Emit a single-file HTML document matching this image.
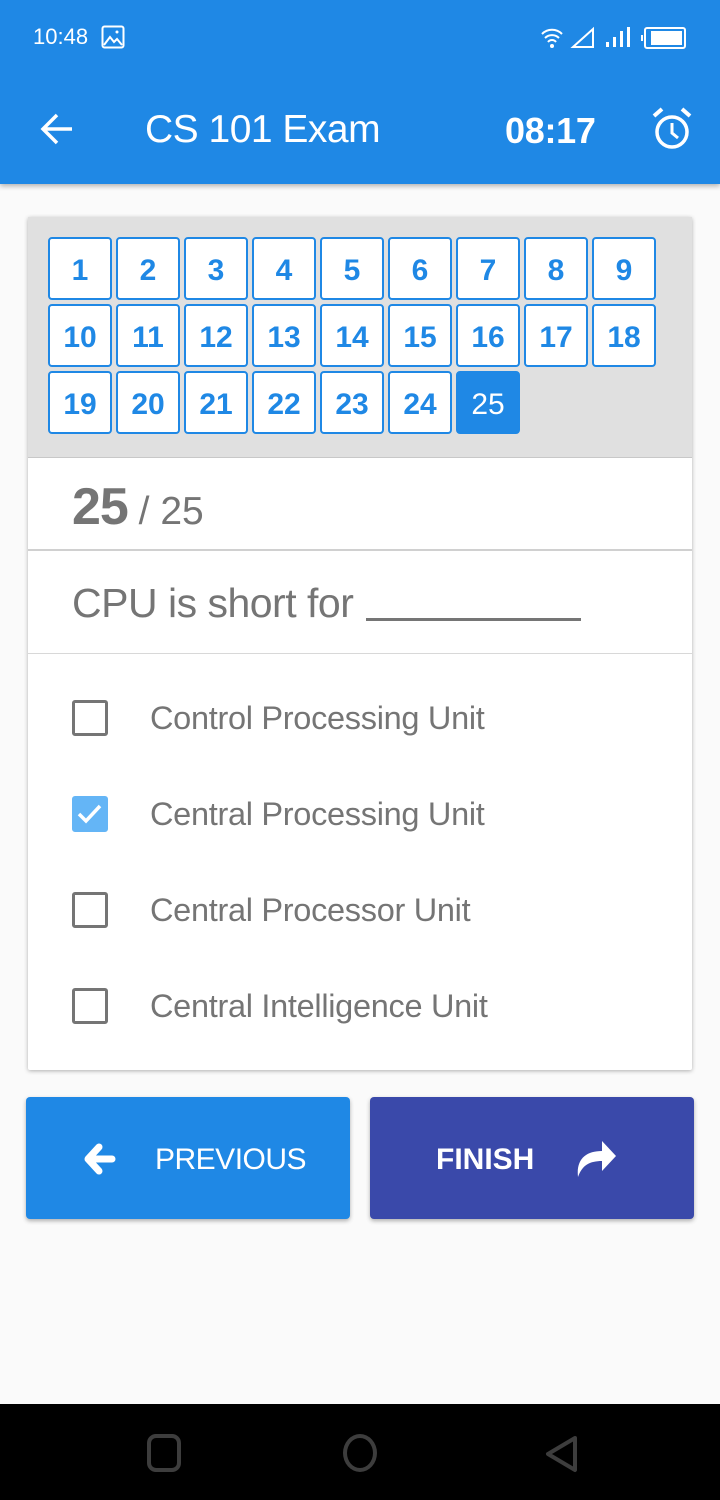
<!DOCTYPE html>
<html><head><meta charset="utf-8"><style>
*{margin:0;padding:0;box-sizing:border-box}
body{width:720px;height:1500px;background:#fafafa;font-family:"Liberation Sans",sans-serif;position:relative;overflow:hidden}
.abs{position:absolute}
.bar{left:0;top:0;width:720px;height:184px;background:#1f88e5;box-shadow:0 2px 5px rgba(0,0,0,.3)}
.card{left:28px;top:217px;width:664px;height:853px;background:#fff;box-shadow:0 1px 4px rgba(0,0,0,.3);border-radius:2px}
.grid{left:0;top:0;width:664px;height:241px;background:#e0e0e0;border-bottom:1px solid #c8c8c8}
.q{width:64px;height:63px;border:2px solid #1f88e5;border-radius:4px;background:#fff;color:#1f88e5;font-weight:bold;font-size:30px;display:flex;align-items:center;justify-content:center;padding-top:4px}
.q.a{background:#1f88e5;color:#fff;font-weight:normal}
.opt{left:122px;font-size:32.5px;color:#757575;letter-spacing:-0.3px}
.cb{left:44px;width:36px;height:36px;border:3px solid #757575;border-radius:3px}
.btn{top:1097px;width:324px;height:122px;border-radius:4px;box-shadow:0 2px 4px rgba(0,0,0,.3);color:#fff;font-size:30px}
</style></head><body>
<div class="abs bar">
 <div class="abs" style="left:33px;top:24px;color:#fff;font-size:22px">10:48</div>
 <svg class="abs" style="left:101px;top:25px" width="24" height="24" viewBox="0 0 24 24"><rect x="1.5" y="1.5" width="21" height="21" rx="2" fill="none" stroke="#fff" stroke-width="2"/><path d="M3 20l6-8 4 5 3-3 5 6" fill="none" stroke="#fff" stroke-width="2"/><circle cx="16" cy="7" r="1.5" fill="#fff"/></svg>
 <svg class="abs" style="left:540px;top:26px" width="150" height="24" viewBox="0 0 150 24">
  <path d="M2 8a14 14 0 0 1 20 0M5 12a10 10 0 0 1 14 0M8 16a5 5 0 0 1 8 0" fill="none" stroke="#fff" stroke-width="2"/><circle cx="12" cy="20" r="2" fill="#fff"/>
  <path d="M33 21L53 3V21Z" fill="none" stroke="#fff" stroke-width="2"/>
  <rect x="66" y="16" width="3" height="5" fill="#fff"/><rect x="73" y="11" width="3" height="10" fill="#fff"/><rect x="80" y="5" width="3" height="16" fill="#fff"/><rect x="87" y="1" width="3" height="20" fill="#fff"/>
  <rect x="101" y="9" width="2" height="6" fill="#fff"/><rect x="105" y="2" width="40" height="20" rx="2" fill="none" stroke="#fff" stroke-width="2"/><rect x="111" y="5" width="31" height="14" fill="#fff"/>
 </svg>
 <svg class="abs" style="left:38px;top:110px" width="38" height="38" viewBox="0 0 38 38"><path d="M34 19H5M19 5L5 19l14 14" fill="none" stroke="#fff" stroke-width="3.5"/></svg>
 <div class="abs" style="left:145px;top:108px;color:#fff;font-size:39px;letter-spacing:-0.5px">CS 101 Exam</div>
 <div class="abs" style="left:505px;top:110px;color:#fff;font-size:36px;font-weight:bold;letter-spacing:-0.3px">08:17</div>
 <svg class="abs" style="left:650px;top:106px" width="44" height="46" viewBox="0 0 44 46"><circle cx="22" cy="26" r="15" fill="none" stroke="#fff" stroke-width="3.5"/><path d="M22 17v10l6 5" fill="none" stroke="#fff" stroke-width="3"/><path d="M4 10L12 3M40 10L32 3" stroke="#fff" stroke-width="4"/></svg>
</div>

<div class="abs card">
 <div class="abs grid">
  <div class="abs q" style="left:20px;top:20px">1</div><div class="abs q" style="left:88px;top:20px">2</div><div class="abs q" style="left:156px;top:20px">3</div><div class="abs q" style="left:224px;top:20px">4</div><div class="abs q" style="left:292px;top:20px">5</div><div class="abs q" style="left:360px;top:20px">6</div><div class="abs q" style="left:428px;top:20px">7</div><div class="abs q" style="left:496px;top:20px">8</div><div class="abs q" style="left:564px;top:20px">9</div>
  <div class="abs q" style="left:20px;top:87px">10</div><div class="abs q" style="left:88px;top:87px">11</div><div class="abs q" style="left:156px;top:87px">12</div><div class="abs q" style="left:224px;top:87px">13</div><div class="abs q" style="left:292px;top:87px">14</div><div class="abs q" style="left:360px;top:87px">15</div><div class="abs q" style="left:428px;top:87px">16</div><div class="abs q" style="left:496px;top:87px">17</div><div class="abs q" style="left:564px;top:87px">18</div>
  <div class="abs q" style="left:20px;top:154px">19</div><div class="abs q" style="left:88px;top:154px">20</div><div class="abs q" style="left:156px;top:154px">21</div><div class="abs q" style="left:224px;top:154px">22</div><div class="abs q" style="left:292px;top:154px">23</div><div class="abs q" style="left:360px;top:154px">24</div><div class="abs q a" style="left:428px;top:154px">25</div>
 </div>
 <div class="abs" style="left:44px;top:260px;color:#757575;white-space:nowrap"><span style="font-size:52px;font-weight:bold;letter-spacing:-1px">25</span><span style="font-size:39px"> / 25</span></div>
 <div class="abs" style="left:0;top:332px;width:664px;height:2px;background:#d0d0d0"></div>
 <div class="abs" style="left:44px;top:363px;font-size:41px;color:#757575;letter-spacing:-0.5px">CPU is short for</div>
 <div class="abs" style="left:338px;top:401px;width:215px;height:3px;background:#757575"></div>
 <div class="abs" style="left:0;top:436px;width:664px;height:1px;background:#d8d8d8"></div>
 <div class="abs cb" style="top:483px"></div><div class="abs opt" style="top:483px">Control Processing Unit</div>
 <div class="abs cb" style="top:579px;background:#64b5f6;border-color:#64b5f6"><svg width="30" height="30" viewBox="0 0 30 30" style="position:absolute;left:0;top:0"><path d="M4 15l7 7 14-15" fill="none" stroke="#fff" stroke-width="3.5"/></svg></div><div class="abs opt" style="top:579px">Central Processing Unit</div>
 <div class="abs cb" style="top:675px"></div><div class="abs opt" style="top:675px">Central Processor Unit</div>
 <div class="abs cb" style="top:771px"></div><div class="abs opt" style="top:771px">Central Intelligence Unit</div>
</div>

<div class="abs btn" style="left:26px;background:#1f88e5">
 <svg class="abs" style="left:54px;top:44px" width="36" height="36" viewBox="0 0 36 36"><path d="M32 18H10M19 6L8 18l11 12" fill="none" stroke="#fff" stroke-width="7" stroke-linejoin="round" stroke-linecap="round"/></svg>
 <div class="abs" style="left:129px;top:46px;letter-spacing:-0.5px">PREVIOUS</div>
</div>
<div class="abs btn" style="left:370px;background:#3a49aa">
 <div class="abs" style="left:66px;top:46px;font-weight:bold">FINISH</div>
 <svg class="abs" style="left:206px;top:40px" width="44" height="42" viewBox="0 0 44 42"><path d="M2 40C0 22 10 14 26 14V4l14 15-14 15V24C14 24 6 28 2 40Z" fill="#fff"/></svg>
</div>

<div class="abs" style="left:0;top:1404px;width:720px;height:96px;background:#000">
 <div class="abs" style="left:147px;top:30px;width:34px;height:38px;border:4px solid #3d3d3d;border-radius:9px"></div>
 <div class="abs" style="left:343px;top:30px;width:34px;height:38px;border:4px solid #3d3d3d;border-radius:50%"></div>
 <svg class="abs" style="left:542px;top:30px" width="38" height="40" viewBox="0 0 38 40"><path d="M33 4L6 20l27 16Z" fill="none" stroke="#3d3d3d" stroke-width="4" stroke-linejoin="round"/></svg>
</div>
</body></html>
